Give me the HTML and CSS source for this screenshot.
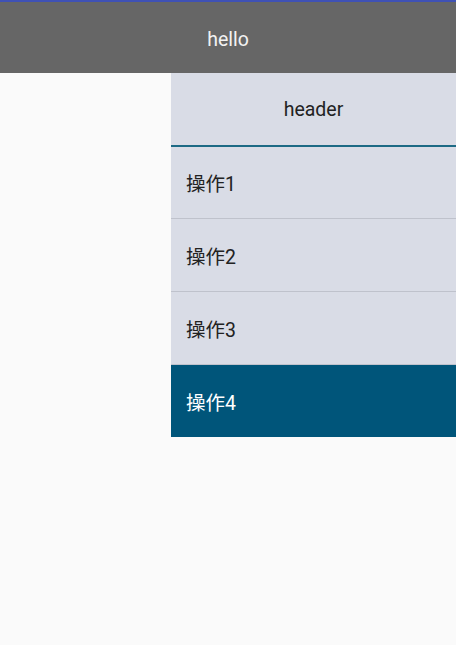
FILE: index.html
```html
<!DOCTYPE html>
<html lang="zh">
<head>
<meta charset="utf-8">
<link rel="stylesheet" href="styles.css">
</head>
<body>
<div class="status"></div>
<div class="toolbar">hello</div>
<div class="content">
  <div class="spacer"></div>
  <div class="menu">
    <div class="menu-header">header</div>
    <div class="item first">操作1</div>
    <div class="item">操作2</div>
    <div class="item">操作3</div>
    <div class="item active">操作4</div>
  </div>
</div>
</body>
</html>
```
FILE: styles.css
```css
html, body {
  margin: 0;
  padding: 0;
  background: #fafafa;
  font-family: Roboto, "Noto Sans CJK SC", sans-serif;
}
.status {
  height: 2px;
  background: #3f51b5;
}
.toolbar {
  height: 68px;
  padding-top: 3px;
  background: #666666;
  color: #f2f2f2;
  font-size: 19.5px;
  display: flex;
  align-items: center;
  justify-content: center;
}
.content {
  display: flex;
}
.spacer {
  width: 171px;
}
.menu {
  flex: 1;
  background: #d9dce6;
}
.menu-header {
  height: 72px;
  border-bottom: 2px solid #1d6a85;
  display: flex;
  align-items: center;
  justify-content: center;
  font-size: 19.5px;
  color: #222;
}
.item {
  height: 72px;
  border-bottom: 1px solid #bfc2cc;
  display: flex;
  align-items: center;
  padding-left: 15px;
  font-size: 19.5px;
  color: #222;
}
.item.first {
  height: 71px;
}
.item.active {
  height: 72px;
  border-bottom: none;
  background: #00557a;
  color: #ffffff;
}
```
